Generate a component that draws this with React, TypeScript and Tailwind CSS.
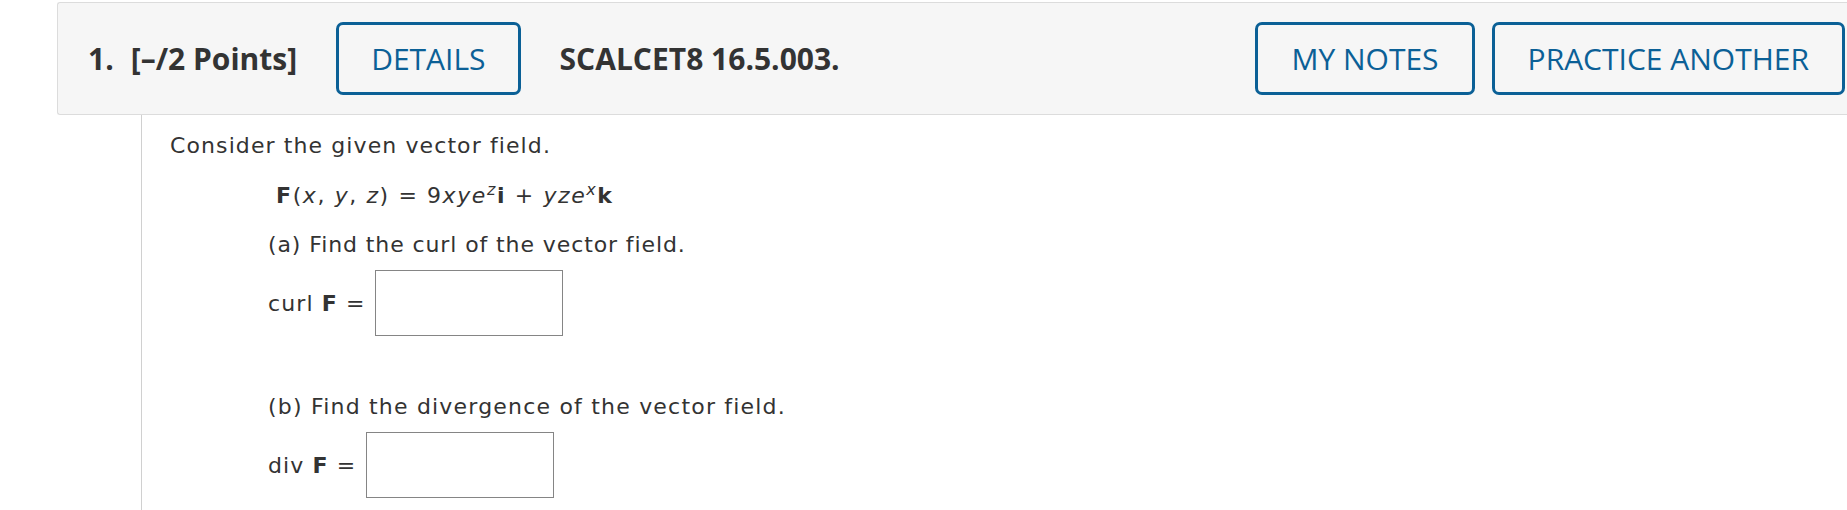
import React from 'react'

const body = "font-['DejaVu_Sans',Verdana,sans-serif] text-[22px] tracking-[1.1px] text-[#333333]"

const AnswerRow = ({ label, boxClass }: { label: string; boxClass: string }) => (
  <div className="flex items-center">
    <span>
      {label} <b>F</b> =
    </span>
    <input type="text" className={`${boxClass} h-[66px] w-[188px] border border-[#858585] bg-white outline-none`} />
  </div>
)

export default function App() {
  return (
    <div className="min-h-screen w-[1847px] overflow-hidden bg-white pt-[2px]">
      {/* question header */}
      <div className="ml-[57px] flex h-[113px] items-center rounded-l-[3px] border border-r-0 border-[#dcdcdc] bg-[#f6f6f6] pl-[30px] pr-[2px] font-['Open_Sans',sans-serif] text-[30px] text-[#333333]">
        <span className="font-bold">1.</span>
        <span className="ml-[17px] font-bold">[–/2 Points]</span>
        <button className="ml-[39px] h-[73px] rounded-[7px] border-[3px] border-[#0b6096] px-[32px] font-medium text-[#0b6096]">DETAILS</button>
        <span className="ml-[39px] font-bold">SCALCET8 16.5.003.</span>
        <div className="ml-auto flex gap-[17px]">
          <button className="h-[73px] rounded-[7px] border-[3px] border-[#0b6096] px-[33px] font-medium text-[#0b6096]">MY NOTES</button>
          <button className="h-[73px] rounded-[7px] border-[3px] border-[#0b6096] px-[33px] font-medium text-[#0b6096]">PRACTICE ANOTHER</button>
        </div>
      </div>

      {/* question body */}
      <div className="ml-[141px] border-l border-[#d0d0d0] pb-[20px] pl-[28px] pt-[18px]">
        <div className={body}>
          <p className="leading-[26px]">Consider the given vector field.</p>
          <div className="ml-[106px] mt-[24px] leading-[26px] tracking-[1.6px]">
            <b>F</b>(<i>x</i>, <i>y</i>, <i>z</i>) = 9<i>xye</i>
            <sup className="text-[16px] italic">z</sup>
            <b>i</b> + <i>yze</i>
            <sup className="text-[16px] italic">x</sup>
            <b>k</b>
          </div>
          <div className="ml-[98px] mt-[23px] flex flex-col">
            <p className="leading-[26px] tracking-[0.9px]">(a) Find the curl of the vector field.</p>
            <div className="mt-[12px]">
              <AnswerRow label="curl" boxClass="ml-[10px]" />
            </div>
            <p className="mt-[58px] leading-[26px] tracking-[1.2px]">(b) Find the divergence of the vector field.</p>
            <div className="mt-[12px]">
              <AnswerRow label="div" boxClass="ml-[10px]" />
            </div>
          </div>
        </div>
      </div>
    </div>
  )
}
